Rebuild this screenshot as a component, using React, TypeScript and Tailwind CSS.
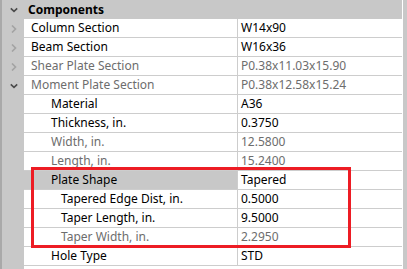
import React from 'react';

type Row = {
    label: string;
    value: string;
    level: number;
    muted?: boolean;
    chevron?: 'right' | 'down';
    category?: boolean;
};

const rows: Row[] = [
    { label: 'Column Section', value: 'W14x90', level: 1, chevron: 'right' },
    { label: 'Beam Section', value: 'W16x36', level: 1, chevron: 'right' },
    { label: 'Shear Plate Section', value: 'P0.38x11.03x15.90', level: 1, chevron: 'right', muted: true },
    { label: 'Moment Plate Section', value: 'P0.38x12.58x15.24', level: 1, chevron: 'down', muted: true },
    { label: 'Material', value: 'A36', level: 2 },
    { label: 'Thickness, in.', value: '0.3750', level: 2 },
    { label: 'Width, in.', value: '12.5800', level: 2, muted: true },
    { label: 'Length, in.', value: '15.2400', level: 2, muted: true },
    { label: 'Plate Shape', value: 'Tapered', level: 2, category: true },
    { label: 'Tapered Edge Dist, in.', value: '0.5000', level: 3 },
    { label: 'Taper Length, in.', value: '9.5000', level: 3 },
    { label: 'Taper Width, in.', value: '2.2950', level: 3, muted: true },
    { label: 'Hole Type', value: 'STD', level: 2 },
];

const indent: Record<number, string> = {
    1: 'pl-[7px]',
    2: 'pl-[27px]',
    3: 'pl-[37px]',
};

const Chevron: React.FC<{ dir: 'right' | 'down'; dark?: boolean }> = ({ dir, dark }) => (
    <svg width="8" height="8" viewBox="0 0 8 8" className={dark ? 'text-[#4a4a4a]' : 'text-[#a3a3a3]'}>
        {dir === 'right' ? (
            <path d="M2 0.5 L5.5 4 L2 7.5" fill="none" stroke="currentColor" strokeWidth="1.6" />
        ) : (
            <path d="M0.8 2.3 L4 5.3 L7.2 2.3" fill="none" stroke="currentColor" strokeWidth="1.6" />
        )}
    </svg>
);

export default function App() {
    return (
        <div
            className="relative flex h-[269px] w-[407px] overflow-hidden bg-white text-[12px] text-black"
            style={{ fontFamily: '"Noto Sans", "Open Sans", sans-serif' }}
        >
            <div className="w-[2px] shrink-0 bg-[#a9a9a9]" />
            <div className="flex w-[400px] shrink-0 flex-col">
                <div className="flex h-[19px] items-center bg-[#c8c8c8]">
                    <div className="flex w-[22px] justify-center pl-[2px]">
                        <Chevron dir="down" dark />
                    </div>
                    <span className="pl-[4px] font-bold leading-none">Components</span>
                </div>
                {rows.map((r) => (
                    <div key={r.label} className="flex h-[19px]">
                        <div className="flex w-[22px] shrink-0 items-center justify-center bg-[#c8c8c8] pl-[2px]">
                            {r.chevron && <Chevron dir={r.chevron} dark={r.chevron === 'down'} />}
                        </div>
                        <div
                            className={`flex w-[213px] shrink-0 items-center border-b border-[#cdcdcd] leading-none ${indent[r.level]} ${
                                r.category ? 'bg-[#c8c8c8]' : ''
                            } ${r.muted ? 'text-[#6d6d6d]' : ''}`}
                        >
                            {r.label}
                        </div>
                        <div
                            className={`flex flex-1 items-center border-b border-l border-[#cdcdcd] pl-[3px] leading-none ${
                                r.muted ? 'text-[#6d6d6d]' : ''
                            }`}
                        >
                            {r.value}
                        </div>
                    </div>
                ))}
                <div className="flex flex-1">
                    <div className="w-[22px] bg-[#c8c8c8]" />
                </div>
            </div>
            <div className="w-[1px] shrink-0" />
            <div className="w-[4px] shrink-0 bg-[#c8c8c8]" />
            <div className="absolute left-[31px] top-[167px] h-[81px] w-[320px] border-[3px] border-[#ed1c24]" />
        </div>
    );
}
